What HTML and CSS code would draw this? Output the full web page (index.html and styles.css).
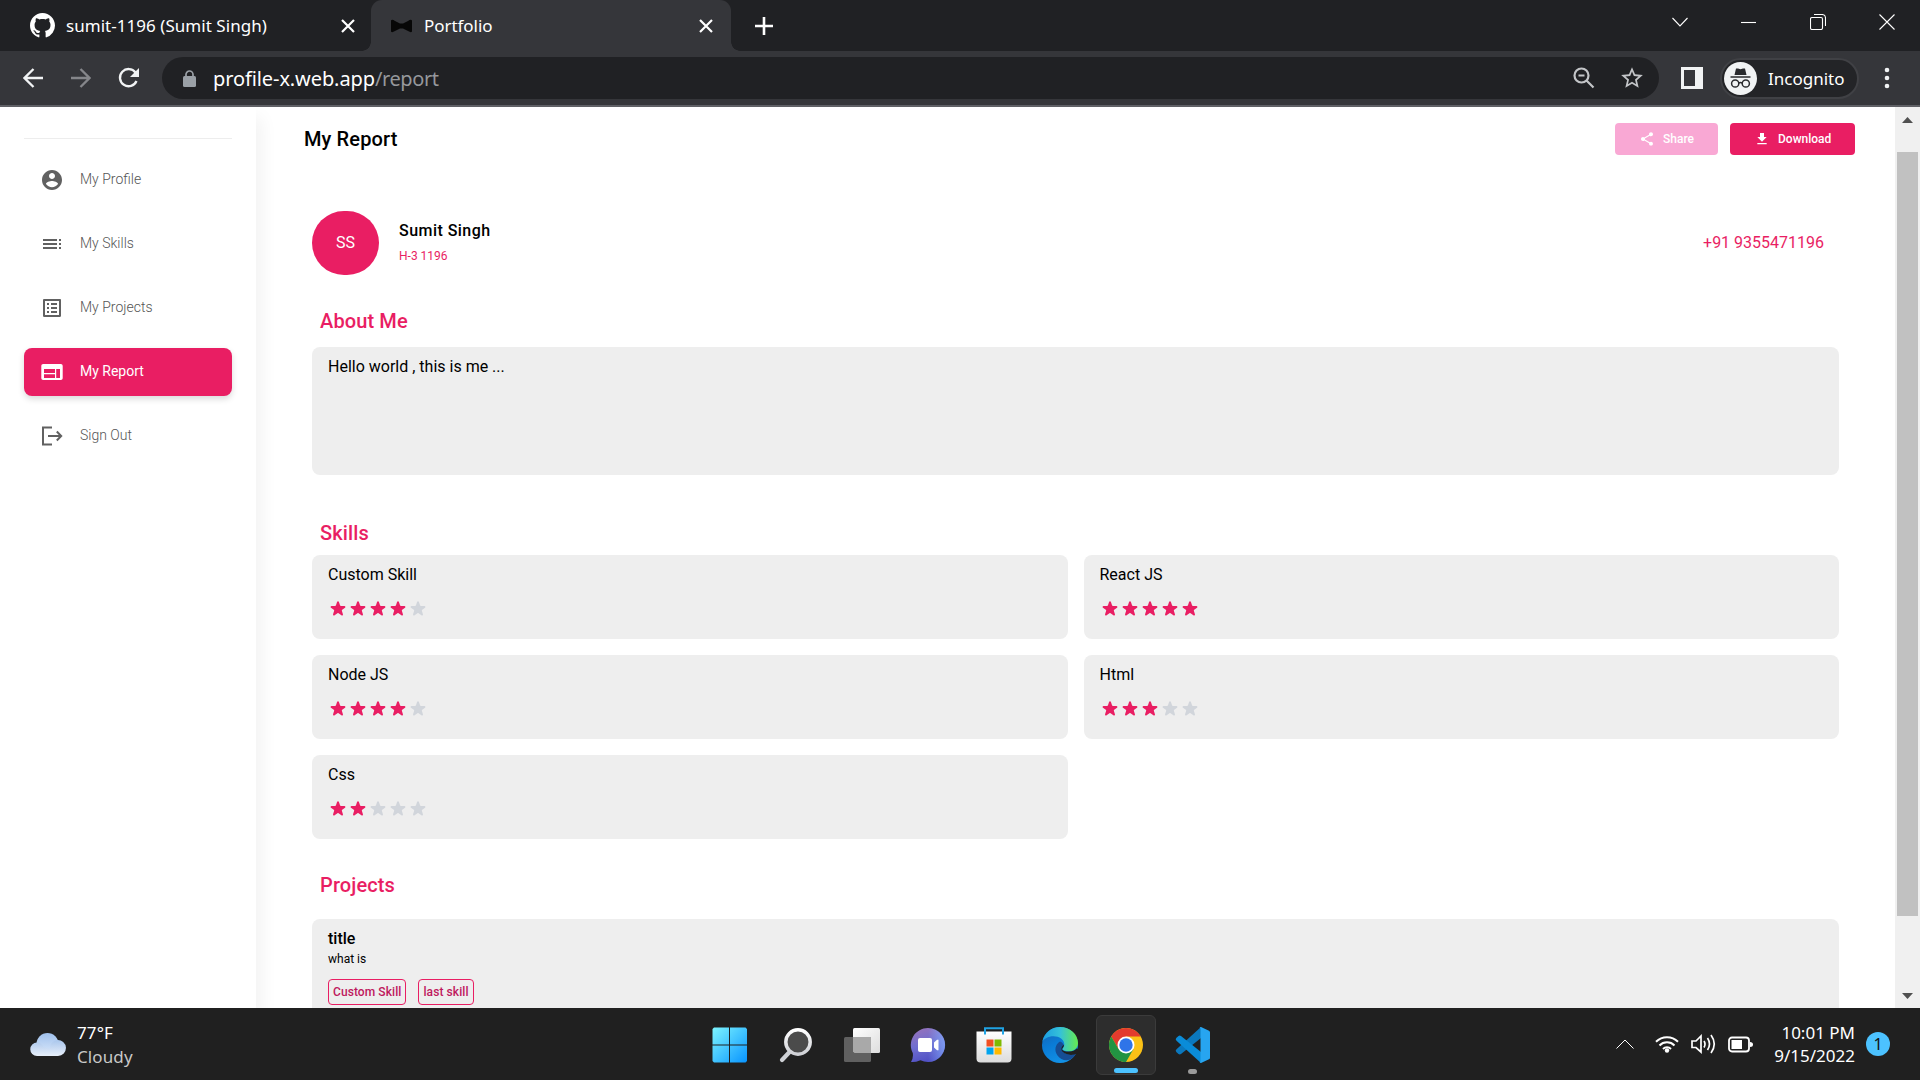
FILE: index.html
```html
<!DOCTYPE html>
<html lang="en">
<head>
<meta charset="utf-8">
<title>Portfolio</title>
<link rel="stylesheet" href="styles.css">
</head>
<body>
<svg width="0" height="0" class="defs">
  <defs>
    <symbol id="star" viewBox="0 0 20 20"><path d="M9.05 2.93c.3-.92 1.6-.92 1.9 0l1.07 3.29a1 1 0 0 0 .95.69h3.46c.97 0 1.37 1.24.59 1.81l-2.8 2.03a1 1 0 0 0-.36 1.12l1.07 3.29c.3.92-.76 1.69-1.54 1.12l-2.8-2.03a1 1 0 0 0-1.18 0l-2.8 2.03c-.78.57-1.83-.2-1.54-1.12l1.07-3.29a1 1 0 0 0-.36-1.12L2.98 8.72c-.78-.57-.38-1.81.59-1.81h3.46a1 1 0 0 0 .95-.69z"/></symbol>
    <symbol id="close" viewBox="0 0 14 14"><path d="M1 1l12 12M13 1L1 13" fill="none" stroke="#fff" stroke-width="2.2"/></symbol>
  </defs>
</svg>

<header class="tabs">
  <div class="tab">
    <svg class="tab-icon" width="25" height="25" viewBox="0 0 16 16"><path fill="#fff" d="M8 0C3.58 0 0 3.58 0 8c0 3.54 2.29 6.53 5.47 7.59.4.07.55-.17.55-.38 0-.19-.01-.82-.01-1.49-2.01.37-2.53-.49-2.69-.94-.09-.23-.48-.94-.82-1.13-.28-.15-.68-.52-.01-.53.63-.01 1.08.58 1.23.82.72 1.21 1.87.87 2.33.66.07-.52.28-.87.51-1.07-1.78-.2-3.64-.89-3.64-3.95 0-.87.31-1.59.82-2.15-.08-.2-.36-1.02.08-2.12 0 0 .67-.21 2.2.82.64-.18 1.32-.27 2-.27s1.36.09 2 .27c1.53-1.04 2.2-.82 2.2-.82.44 1.1.16 1.92.08 2.12.51.56.82 1.27.82 2.15 0 3.07-1.87 3.75-3.65 3.95.29.25.54.73.54 1.48 0 1.07-.01 1.93-.01 2.2 0 .21.15.46.55.38A8.01 8.01 0 0 0 16 8c0-4.42-3.58-8-8-8z"/></svg>
    <span class="tab-title first-title">sumit-1196 (Sumit Singh)</span>
    <svg class="tab-close" width="14" height="14"><use href="#close"/></svg>
  </div>
  <div class="tab active">
    <svg class="tab-icon" width="21" height="14" viewBox="0 0 21 14"><path d="M0 1.5Q1 0 4 2l5 2.6h3L17 2q3-2 4-.5v11q-1 1.500-4-.5l-5-2.600H9L4 12q-3 2-4 .5z" fill="#070707"/></svg>
    <span class="tab-title">Portfolio</span>
    <svg class="tab-close" width="14" height="14"><use href="#close"/></svg>
  </div>
  <svg class="new-tab" width="18" height="18" viewBox="0 0 18 18"><path d="M9 0v18M0 9h18" stroke="#fff" stroke-width="2.600"/></svg>
  <div class="window-buttons">
    <svg width="16" height="16" viewBox="0 0 16 16"><path d="M.5 4L8 12l7.500-8"/></svg>
    <svg width="16" height="16" viewBox="0 0 16 16"><path d="M0 8.500h15"/></svg>
    <svg width="16" height="16" viewBox="0 0 16 16"><rect x=".5" y="3.500" width="12" height="12" rx="1.500"/><path d="M4 .5h8q3.500 0 3.500 3.500v8"/></svg>
    <svg width="16" height="16" viewBox="0 0 16 16"><path d="M.5.5l15 15M15.500.5l-15 15"/></svg>
  </div>
</header>

<div class="toolbar">
  <svg class="nav-icon" width="20" height="20" viewBox="0 0 20 20"><path d="M20 10H2M10.500 1l-9 9 9 9" stroke="#f1f3f4"/></svg>
  <svg class="nav-icon forward" width="20" height="20" viewBox="0 0 20 20"><path d="M0 10h18M9.500 1l9 9-9 9" stroke="#85868a"/></svg>
  <svg class="nav-icon reload" width="22" height="22" viewBox="0 0 22 22"><path d="M18.500 14A8.600 8.600 0 1 1 17.500 5.500" stroke="#f1f3f4"/><path d="M21 1v9h-9z" fill="#f1f3f4" stroke="none"/></svg>
  <div class="omnibox">
    <svg class="lock" width="13" height="17" viewBox="0 0 13 17"><rect y="6" width="13" height="11" rx="1.500" fill="#9aa0a6"/><path d="M3 7V4.500a3.500 3.500 0 0 1 7 0V7" fill="none" stroke="#9aa0a6" stroke-width="1.700"/></svg>
    <span class="url"><b>profile-x.web.app</b><i>/report</i></span>
    <svg class="magnifier" width="22" height="22" viewBox="0 0 22 22"><path d="M15.500 8.500a7 7 0 1 1-14 0 7 7 0 0 1 14 0zM13.500 13.500l7 7M5.500 8.500h6" fill="none" stroke="#c3c5c8" stroke-width="2.200"/></svg>
    <svg class="bookmark" width="26" height="26" viewBox="0 0 24 24"><path fill="#c3c5c8" d="M22 9.240l-7.190-.62L12 2 9.190 8.630 2 9.240l5.460 4.730L5.820 21 12 17.270 18.180 21l-1.630-7.030L22 9.240zM12 15.400l-3.760 2.270 1-4.280-3.320-2.880 4.380-.38L12 6.100l1.710 4.040 4.380.38-3.320 2.880 1 4.280L12 15.400z"/></svg>
  </div>
  <svg class="panel" width="22" height="22" viewBox="0 0 22 22"><path fill="#f1f3f4" fill-rule="evenodd" d="M0 0h22v22H0zM3 3v16h11V3z"/></svg>
  <div class="incognito">
    <svg width="33" height="33" viewBox="0 0 33 33"><circle cx="16.500" cy="16.500" r="16.500" fill="#f1f3f4"/><path d="M12 6.500h2l2.500.8 2.500-.8h2L22.500 13h-12z" fill="#292a2d"/><path d="M6.500 15h20" stroke="#292a2d" stroke-width="1.500"/><g fill="none" stroke="#292a2d" stroke-width="1.500"><circle cx="11.200" cy="21.500" r="3.600"/><circle cx="21.800" cy="21.500" r="3.600"/><path d="M14.800 21q1.700-1 3.400 0"/></g></svg>
    <span>Incognito</span>
  </div>
  <svg class="dots" width="6" height="22" viewBox="0 0 6 22"><g fill="#f1f3f4"><circle cx="3" cy="3" r="2.300"/><circle cx="3" cy="11" r="2.300"/><circle cx="3" cy="19" r="2.300"/></g></svg>
</div>

<div class="viewport">
  <nav class="sidebar">
    <div class="nav-list">
      <a class="nav-item"><svg width="24" height="24" viewBox="0 0 24 24"><path d="M12 2C6.480 2 2 6.480 2 12s4.480 10 10 10 10-4.480 10-10S17.520 2 12 2zm0 3c1.660 0 3 1.340 3 3s-1.340 3-3 3-3-1.340-3-3 1.340-3 3-3zm0 14.200c-2.500 0-4.710-1.280-6-3.220.03-1.990 4-3.080 6-3.080 1.990 0 5.970 1.090 6 3.080-1.290 1.940-3.500 3.220-6 3.220z"/></svg><span>My Profile</span></a>
      <a class="nav-item"><svg width="24" height="24" viewBox="0 0 24 24"><path d="M3 9h14V7H3v2zm0 4h14v-2H3v2zm0 4h14v-2H3v2zm16 0h2v-2h-2v2zm0-10v2h2V7h-2zm0 6h2v-2h-2v2z"/></svg><span>My Skills</span></a>
      <a class="nav-item"><svg width="24" height="24" viewBox="0 0 24 24"><path d="M19 5v14H5V5h14m1.100-2H3.900c-.5 0-.9.4-.9.900v16.200c0 .4.4.9.900.9h16.200c.4 0 .9-.5.900-.9V3.900c0-.5-.5-.9-.9-.9zM11 7h6v2h-6V7zm0 4h6v2h-6v-2zm0 4h6v2h-6zM7 7h2v2H7zm0 4h2v2H7zm0 4h2v2H7z"/></svg><span>My Projects</span></a>
      <a class="nav-item selected"><svg width="24" height="24" viewBox="0 0 24 24"><path fill-rule="evenodd" d="M3.200 4h17.600C22 4 22.700 4.700 22.700 6v12c0 1.300-.7 2-1.900 2H3.200c-1.200 0-1.900-.7-1.900-2V6c0-1.300.7-2 1.900-2zM4 9v4h11V9zm0 5.200V18h11v-3.800zM16.200 9v9H20V9z"/></svg><span>My Report</span></a>
      <a class="nav-item"><svg width="24" height="24" viewBox="0 0 24 24"><path d="M12 3.500H3V20.500h9M8 12h13M16.800 7.500L21.200 12l-4.400 4.500" fill="none" stroke="#616161" stroke-width="2"/></svg><span>Sign Out</span></a>
    </div>
  </nav>

  <main class="report">
    <div class="report-head">
      <h1>My Report</h1>
      <button class="btn share"><svg width="16" height="16" viewBox="0 0 24 24"><path d="M18 16.080c-.76 0-1.440.3-1.960.77L8.910 12.700c.05-.23.09-.46.09-.7s-.04-.47-.09-.7l7.050-4.110c.54.5 1.250.81 2.040.81 1.660 0 3-1.340 3-3s-1.340-3-3-3-3 1.340-3 3c0 .24.04.47.09.7L8.040 9.810C7.500 9.310 6.790 9 6 9c-1.660 0-3 1.340-3 3s1.340 3 3 3c.79 0 1.500-.31 2.040-.81l7.120 4.160c-.05.210-.08.430-.08.650 0 1.610 1.310 2.920 2.920 2.920s2.920-1.310 2.920-2.920-1.310-2.920-2.920-2.920z"/></svg><span>Share</span></button>
      <button class="btn download"><svg width="16" height="16" viewBox="0 0 24 24"><path d="M19 9h-4V3H9v6H5l7 7 7-7zM5 18v2h14v-2H5z"/></svg><span>Download</span></button>
    </div>

    <section class="person">
      <div class="avatar">SS</div>
      <div class="who"><strong>Sumit Singh</strong><small>H-3 1196</small></div>
      <span class="phone">+91 9355471196</span>
    </section>

    <h2 class="about-title">About Me</h2>
    <div class="card about">Hello world , this is me ...</div>

    <h2 class="skills-title">Skills</h2>
    <div class="skills">
      <div class="card skill"><span>Custom Skill</span><div class="stars"><svg><use href="#star"/></svg><svg><use href="#star"/></svg><svg><use href="#star"/></svg><svg><use href="#star"/></svg><svg class="off"><use href="#star"/></svg></div></div>
      <div class="card skill"><span>React JS</span><div class="stars"><svg><use href="#star"/></svg><svg><use href="#star"/></svg><svg><use href="#star"/></svg><svg><use href="#star"/></svg><svg><use href="#star"/></svg></div></div>
      <div class="card skill"><span>Node JS</span><div class="stars"><svg><use href="#star"/></svg><svg><use href="#star"/></svg><svg><use href="#star"/></svg><svg><use href="#star"/></svg><svg class="off"><use href="#star"/></svg></div></div>
      <div class="card skill"><span>Html</span><div class="stars"><svg><use href="#star"/></svg><svg><use href="#star"/></svg><svg><use href="#star"/></svg><svg class="off"><use href="#star"/></svg><svg class="off"><use href="#star"/></svg></div></div>
      <div class="card skill"><span>Css</span><div class="stars"><svg><use href="#star"/></svg><svg><use href="#star"/></svg><svg class="off"><use href="#star"/></svg><svg class="off"><use href="#star"/></svg><svg class="off"><use href="#star"/></svg></div></div>
    </div>

    <h2 class="projects-title">Projects</h2>
    <div class="card project">
      <strong>title</strong>
      <small>what is</small>
      <div class="tags"><span class="tag">Custom Skill</span><span class="tag">last skill</span></div>
    </div>
  </main>

  <div class="scrollbar">
    <svg width="11" height="6" viewBox="0 0 11 6"><path d="M5.500 0L11 6H0z" fill="#505050"/></svg>
    <div class="thumb"></div>
    <svg class="down" width="11" height="6" viewBox="0 0 11 6"><path d="M0 0h11L5.500 6z" fill="#505050"/></svg>
  </div>
</div>

<footer class="taskbar">
  <div class="weather">
    <svg width="36" height="23" viewBox="0 0 36 23"><defs><linearGradient id="cl" x2="0" y2="1"><stop stop-color="#9fc0ec"/><stop offset="1" stop-color="#dbe9fb"/></linearGradient><linearGradient id="cl2" x2="0" y2="1"><stop stop-color="#a9c6ec"/><stop offset="1" stop-color="#e8effa"/></linearGradient></defs><circle cx="17.500" cy="11" r="11" fill="url(#cl)"/><path d="M7 9.500a7 7 0 0 1 6.500 4.500L20 16a8 8 0 1 1 8 7H7A6.700 6.700 0 0 1 7 9.500z" fill="url(#cl2)"/></svg>
    <div class="weather-text"><span>77°F</span><span class="dim">Cloudy</span></div>
  </div>

  <div class="apps">
    <div class="app"><svg width="36" height="36" viewBox="0 0 36 36"><defs><linearGradient id="w" x2="1" y2="1"><stop stop-color="#7df5ff"/><stop offset="1" stop-color="#0894ff"/></linearGradient></defs><path fill="url(#w)" d="M2 .5h15v17H.5V2zM18 .5h15.500L35 2v15.500H18zM.5 18.500H17v17H2L.5 34zM18 18.500h17V34l-1.500 1.500H18z"/></svg></div>
    <div class="app"><svg width="36" height="36" viewBox="0 0 36 36"><defs><linearGradient id="se" x2="0" y2="1"><stop stop-color="#fff"/><stop offset="1" stop-color="#cfd1d6"/></linearGradient></defs><path d="M12 24.500L4 33" stroke="#cfd1d6" stroke-width="4.200" stroke-linecap="round"/><circle cx="20" cy="15" r="12.200" fill="#4b4b4b" stroke="url(#se)" stroke-width="3.500"/></svg></div>
    <div class="app"><svg width="36" height="36" viewBox="0 0 36 36"><defs><linearGradient id="tv" x2="1" y2="1"><stop stop-color="#fff"/><stop offset="1" stop-color="#ddd"/></linearGradient></defs><rect x="9" y="1" width="27" height="25" rx="1.500" fill="url(#tv)"/><rect y="10" width="27" height="25" rx="1.500" fill="#606060"/><path d="M9 10h18v16H10.500L9 24.500z" fill="#a9a9a9"/></svg></div>
    <div class="app"><svg width="36" height="36" viewBox="0 0 36 36"><defs><linearGradient id="ch" x1=".2" x2=".5" y2="1"><stop stop-color="#9672bb"/><stop offset=".5" stop-color="#6f6ed0"/><stop offset="1" stop-color="#4f4fc4"/></linearGradient><linearGradient id="ch2" x1="0" x2="1" y2="0"><stop offset=".5" stop-color="#86b0ff" stop-opacity="0"/><stop offset="1" stop-color="#86b0ff" stop-opacity=".7"/></linearGradient></defs><path d="M18 1a17 17 0 1 1-7.500 32.200Q5 35.500 1 35q2.500-4 1.800-9A17 17 0 0 1 18 1z" fill="url(#ch)"/><circle cx="18" cy="18" r="17" fill="url(#ch2)"/><rect x="8" y="11" width="14" height="14" rx="2" fill="#fff"/><path d="M24 15.500l3-2.700h1.500v10.500H27l-3-2.800z" fill="#fff"/></svg></div>
    <div class="app"><svg width="36" height="36" viewBox="0 0 36 36"><defs><linearGradient id="st" x2="0" y2="1"><stop stop-color="#fff"/><stop offset="1" stop-color="#dcdcdc"/></linearGradient></defs><path d="M.5 4.500h35v27q0 4-4 4h-27q-4 0-4-4z" fill="url(#st)"/><path d="M9 7.500V1.200h18v6.300" fill="none" stroke="#1fa3e4" stroke-width="2"/><path fill="#f25022" d="M10.500 12.500h7v7h-7z"/><path fill="#7fba00" d="M18.500 12.500h7v7h-7z"/><path fill="#00a4ef" d="M10.500 20.500h7v7h-7z"/><path fill="#ffb900" d="M18.500 20.500h7v7h-7z"/></svg></div>
    <div class="app"><svg width="36" height="36" viewBox="0 0 36 36"><defs><linearGradient id="e1" x2="1"><stop stop-color="#1b9de2"/><stop offset=".5" stop-color="#35c1d8"/><stop offset="1" stop-color="#66eb4e"/></linearGradient><linearGradient id="e2" x2=".5" y2="1"><stop stop-color="#1a5fae"/><stop offset=".5" stop-color="#0a7bd6"/><stop offset="1" stop-color="#1291e6"/></linearGradient></defs><circle cx="18" cy="18" r="18" fill="url(#e2)"/><path d="M.4 14.500C2 6 9.500 0 18 0c10 0 18 7 18 16 0 5-4 8.300-9 8.300-4 0-6.500-1.300-6.500-2.300 0-.8 1.800-1.600 1.800-4.500 0-5-5-8.200-10.800-8.200C6 9.300 2 12 .4 14.500z" fill="url(#e1)"/><path d="M18 14.500c-5 3-6 9-2.500 14 3.500 4.800 10 6.500 15 2.500q2.500-2.300 4-5c-3 1.800-9 2.500-13-1-2.500-2.300-1.500-4 0-6q.3-3-3.500-4.500z" fill="#164d94"/><path d="M22 17.500c0 3-1.800 3.500-1.800 4.700 0 1.300 3 2.400 6.800 2.400 3.500 0 6-1.200 7.500-3l3 .5-2 4.500c-5 2-11 1.800-14.500-1.500-2-2-2.500-4.500 1-7.600z" fill="#202020"/></svg></div>
    <div class="app current"><svg width="34" height="34" viewBox="0 0 34 34"><circle cx="17" cy="17" r="17" fill="#fbc116"/><path d="M2.280 8.500A17 17 0 0 1 31.720 8.500H17L9.640 21.250z" fill="#e33b2e"/><path d="M2.280 8.500A17 17 0 0 0 17 34L24.360 21.250 17 17 9.640 21.250z" fill="#229342"/><circle cx="17" cy="17" r="8.500" fill="#fff"/><circle cx="17" cy="17" r="6.700" fill="#2f74e8"/></svg><i class="mark"></i></div>
    <div class="app"><svg width="36" height="36" viewBox="0 0 36 36"><path d="M27 0L2.500 22.200a2 2 0 0 0 0 3L4.500 27q1.200.8 2.500 0L27 11z" fill="#0b78bd"/><path d="M27 36L2.500 13.800a2 2 0 0 1 0-3L4.500 9q1.200-.8 2.500 0L27 25z" fill="#0a8cd8"/><path d="M25.500.3L27 0l8 3.800q1 .5 1 1.500v25.400q0 1-1 1.500L27 36l-1.500-.5q1 0 1-1.500V2q0-1.500-1-1.700z" fill="#27a5f0"/></svg><i class="mark idle"></i></div>
  </div>

  <div class="tray">
    <svg class="up" width="18" height="10" viewBox="0 0 18 10"><path d="M.5 9.500L9 1l8.500 8.500"/></svg>
    <svg class="wifi" width="24" height="18" viewBox="0 0 24 18"><g stroke-width="2"><path d="M1 6.800a15.500 15.500 0 0 1 22 0M4.500 10.500a10.500 10.500 0 0 1 15 0M8 14a5.700 5.700 0 0 1 8 0"/></g><circle cx="12" cy="15.500" r="2.200" fill="#fff" stroke="none"/></svg>
    <svg class="sound" width="25" height="20" viewBox="0 0 25 20"><g stroke-width="1.700"><path d="M1 7v6.500h4l5 4.500V2L5 7zM13 7q2 3 0 6.500M16.500 4q4 6 0 12M20 1q6.500 9 0 18"/></g></svg>
    <svg class="battery" width="25" height="17" viewBox="0 0 25 17"><rect x="1" y="1.500" width="20" height="14" rx="3" stroke-width="1.800"/><rect x="3.500" y="4" width="10.500" height="9" fill="#fff" stroke="none"/><path d="M22 6q3 0 3 2.500T22 11z" fill="#fff" stroke="none"/></svg>
    <div class="clock"><span>10:01 PM</span><span>9/15/2022</span></div>
    <div class="badge">1</div>
  </div>
</footer>
</body>
</html>
```
FILE: styles.css
```css
* { box-sizing: border-box; }
body { margin: 0; width: 1920px; height: 1080px; overflow: hidden; background: #fff; font-family: Roboto, sans-serif; display: flex; flex-direction: column; }
svg { display: block; flex: none; }
.defs { position: absolute; }
h1, h2 { margin: 0; font-weight: 500; font-size: 20px; line-height: 28px; letter-spacing: .12px; }
span { white-space: nowrap; }

/* tab strip */
.tabs { flex: none; height: 51px; background: #202124; display: flex; align-items: center; color: #fff; font-family: "Noto Sans", sans-serif; font-size: 17px; }
.tab { width: 371px; height: 51px; display: flex; align-items: center; padding: 0 16px 0 29.5px; }
.tab-title { flex: 1; margin-left: 11.5px; letter-spacing: -.05px; }
.first-title { letter-spacing: .04px; }
.tab.active { width: 360px; padding: 0 18px 0 20px; background: #35363a; border-radius: 11px 11px 0 0; position: relative; }
.tab.active .tab-title { margin-left: 12px; }
.tab.active::before, .tab.active::after { content: ""; position: absolute; bottom: 0; width: 9px; height: 9px; }
.tab.active::before { left: -9px; background: radial-gradient(circle at 0 0, #202124 8.500px, #35363a 9px); }
.tab.active::after { right: -9px; background: radial-gradient(circle at 100% 0, #202124 8.500px, #35363a 9px); }
.new-tab { margin-left: 23.5px; }
.window-buttons { margin-left: auto; margin-right: 25px; margin-top: -8px; display: flex; gap: 53px; fill: none; stroke: #fff; stroke-width: 1.100; }

/* toolbar */
.toolbar { flex: none; height: 56px; background: #35363a; border-bottom: 2px solid #5f6065; display: flex; align-items: center; padding-left: 23px; font-family: "Noto Sans", sans-serif; color: #fff; }
.nav-icon { flex: none; fill: none; stroke-width: 2.300; margin-right: 28px; }
.forward { margin-right: 27px; }
.reload { margin-right: 22px; }
.omnibox { flex: none; width: 1497px; height: 42px; border-radius: 21px; background: #202124; display: flex; align-items: center; padding: 0 14px 0 21px; }
.url { flex: 1; margin-left: 17px; font-size: 20px; letter-spacing: -.1px; }
.url b { font-weight: 400; }
.url i { font-style: normal; color: #96989c; letter-spacing: -.4px; }
.magnifier { margin-right: 24px; }
.panel { margin-left: 22px; }
.incognito { flex: none; margin-left: 17px; width: 139px; height: 41px; border: 2px solid #404145; border-radius: 21px; background: #232427; display: flex; align-items: center; padding-left: 2px; font-size: 17px; }
.incognito span { margin-left: 11px; }
.dots { margin-left: 25px; }

/* page */
.viewport { flex: none; height: 901px; display: flex; overflow: hidden; }
.sidebar { flex: none; width: 256px; padding: 31px 24px 0; box-shadow: 6px 10px 16px rgba(0, 0, 0, .05); }
.nav-list { border-top: 1px solid #ededed; padding-top: 17px; display: flex; flex-direction: column; gap: 16px; }
.nav-item { height: 48px; border-radius: 8px; display: flex; align-items: center; padding-left: 16px; gap: 16px; font-size: 14px; font-weight: 300; color: #555; fill: #616161; }
.nav-item span { margin-top: -2px; }
.nav-item.selected { background: #e91e63; color: #fff; fill: #fff; font-weight: 400; box-shadow: 0 3px 6px rgba(0, 0, 0, .15); }
.report { flex: none; width: 1639px; padding: 16px 56px 0 56px; color: #000; }
.report-head { display: flex; height: 32px; align-items: center; margin: 0 -16px 0 -8px; }
.report-head h1 { margin-right: auto; }
.btn { border: 0; height: 32px; border-radius: 4px; color: #fff; fill: #fff; font: 500 12px Roboto, sans-serif; display: flex; align-items: center; gap: 8px; padding: 0 0 0 24px; }
.share { width: 103px; background: #f9a8d4; margin-right: 12px; }
.download { width: 125px; background: #e91e63; }
.person { margin-top: 56px; height: 64px; display: flex; align-items: center; }
.avatar { width: 67px; height: 64px; border-radius: 32px; background: #e91e63; color: #fff; display: grid; place-items: center; font-size: 16px; padding-bottom: 1px; }
.who { margin-left: 20px; flex: 1; display: flex; flex-direction: column; margin-top: -3px; }
.who strong { font-weight: 500; font-size: 16px; line-height: 24px; letter-spacing: .46px; }
.who small { font-size: 12px; line-height: 16px; color: #e91e63; margin-top: 5px; }
.phone { color: #e91e63; font-size: 16px; margin: -1px 15px 0 0; }
h2 { color: #e91e63; margin-left: 8px; }
.about-title { margin-top: 32px; }
.card { background: #eee; border-radius: 8px; padding: 8px 16px; font-size: 16px; line-height: 24px; }
.about { margin-top: 12px; height: 128px; }
.skills-title { margin-top: 44px; }
.skills { margin-top: 8px; display: grid; grid-template-columns: 1fr 1fr; gap: 16px; }
.skill { height: 84px; }
.stars { display: flex; margin-top: 12px; fill: #e91e63; }
.stars svg { width: 20px; height: 20px; }
.stars .off { fill: #d1d5db; }
.projects-title { margin-top: 32px; }
.project { margin-top: 20px; height: 140px; display: flex; flex-direction: column; }
.project strong { font-weight: 500; }
.project small { font-size: 12px; line-height: 16px; }
.tags { display: flex; gap: 12px; margin-top: 12px; }
.tag { height: 26px; border: 1px solid #e91e63; border-radius: 4px; padding: 0 4px; font-size: 12px; font-weight: 500; letter-spacing: .08px; color: #be185d; line-height: 24px; }
.scrollbar { flex: none; width: 25px; background: #f0f0f0; display: flex; flex-direction: column; align-items: center; padding: 10px 0 9px; }
.thumb { width: 21px; height: 764px; margin-top: 29px; background: #c1c1c1; }
.down { margin-top: auto; }

/* taskbar */
.taskbar { flex: none; height: 72px; background: #202020; display: flex; align-items: center; color: #fff; font-family: "Noto Sans", sans-serif; font-size: 17px; line-height: 24px; }
.weather { flex: none; width: 700px; padding-left: 30px; display: flex; align-items: center; gap: 11px; }
.weather-text { display: flex; flex-direction: column; margin-top: 2px; letter-spacing: .1px; }
.dim { color: #c8c8c8; }
.apps { display: flex; gap: 6px; }
.app { width: 60px; height: 60px; margin-top: 1px; display: grid; place-items: center; position: relative; }
.app.current { background: #2d2d2d; border: 1px solid #3b3b3b; border-radius: 6px; }
.mark { position: absolute; bottom: 1px; left: 50%; width: 24px; height: 5px; margin-left: -12px; border-radius: 3px; background: #4cc2ff; }
.mark.idle { width: 9px; margin-left: -4px; background: #9a9a9a; }
.tray { margin-left: auto; display: flex; align-items: center; padding-right: 30px; fill: none; stroke: #fff; }
.up { margin-right: 21px; }
.wifi { margin-right: 12px; }
.sound { margin-right: 12px; }
.clock { width: 102px; display: flex; flex-direction: column; text-align: right; line-height: 23px; }
.badge { margin-left: 11px; width: 24px; height: 24px; border-radius: 12px; background: #4cc2ff; color: #111; text-align: center; font-size: 16px; line-height: 24px; }
```
